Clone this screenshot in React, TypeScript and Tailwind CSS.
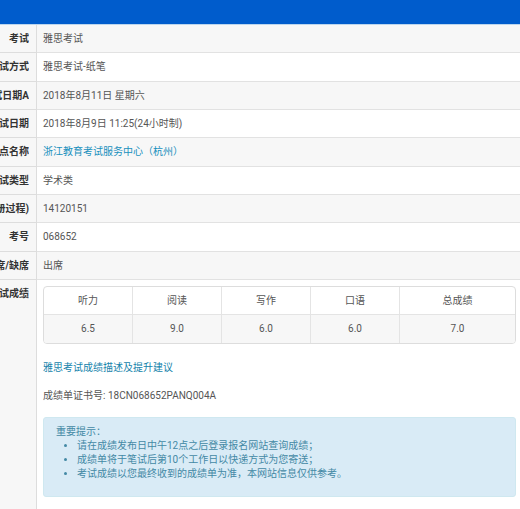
import React from 'react';

interface InfoRow {
    label: string;
    value: string;
    href?: string;
}

const infoRows: InfoRow[] = [
    { label: '考试', value: '雅思考试' },
    { label: '试方式', value: '雅思考试-纸笔' },
    { label: '试日期A', value: '2018年8月11日 星期六' },
    { label: '试日期', value: '2018年8月9日 11:25(24小时制)' },
    { label: '点名称', value: '浙江教育考试服务中心（杭州）', href: '#center' },
    { label: '试类型', value: '学术类' },
    { label: '册过程)', value: '14120151' },
    { label: '考号', value: '068652' },
    { label: '席/缺席', value: '出席' },
];

const scores = [
    { name: '听力', score: '6.5' },
    { name: '阅读', score: '9.0' },
    { name: '写作', score: '6.0' },
    { name: '口语', score: '6.0' },
    { name: '总成绩', score: '7.0' },
];

const notices = [
    '请在成绩发布日中午12点之后登录报名网站查询成绩；',
    '成绩单将于笔试后第10个工作日以快递方式为您寄送；',
    '考试成绩以您最终收到的成绩单为准，本网站信息仅供参考。',
];

function RowLabel({ children }: { children: React.ReactNode }) {
    return (
        <th
            scope="row"
            className="w-[37px] border-r border-b border-[#dddddd] bg-[#f7f7f7] p-0 pr-[7px] align-top font-bold text-[#333333]"
        >
            {/* Long labels run off to the left */}
            <div className="flex justify-end overflow-hidden pt-[7px] whitespace-nowrap">
                <span className="shrink-0">{children}</span>
            </div>
        </th>
    );
}

function ScoreTable() {
    return (
        <table className="w-full table-fixed border-separate border-spacing-0 overflow-hidden rounded border border-[#dddddd] text-center">
            <thead>
                <tr className="h-7">
                    {scores.map((s) => (
                        <th
                            key={s.name}
                            scope="col"
                            className="w-[89px] border-r border-b border-[#e4e4e4] p-0 font-normal last:w-auto last:border-r-0"
                        >
                            {s.name}
                        </th>
                    ))}
                </tr>
            </thead>
            <tbody>
                <tr className="h-7 bg-[#f7f7f7]">
                    {scores.map((s) => (
                        <td key={s.name} className="border-r border-[#e4e4e4] p-0 last:border-r-0">
                            {s.score}
                        </td>
                    ))}
                </tr>
            </tbody>
        </table>
    );
}

function Notice() {
    return (
        <div className="mt-[14px] rounded-[3px] border border-[#cfe8f0] bg-[#d9ebf6] px-3 pt-[7px] pb-[15px] text-[#4489a5]">
            <p>重要提示：</p>
            <ul className="list-disc pl-[21px]">
                {notices.map((text) => (
                    <li key={text}>{text}</li>
                ))}
            </ul>
        </div>
    );
}

export default function App() {
    return (
        <div className="flex min-h-screen flex-col bg-white font-[Roboto,'Noto_Sans_CJK_SC',sans-serif] text-[10px] leading-[14px] text-[#555555]">
            <header className="h-[25px] shrink-0 border-b border-[#bcd6ee] bg-[#005ccc]" />
            <table className="w-full table-fixed border-separate border-spacing-0 text-left">
                <tbody>
                    {infoRows.map((row) => (
                        <tr key={row.label} className="h-7 odd:bg-[#f7f7f7] nth-[3n+2]:h-[29px]">
                            <RowLabel>{row.label}</RowLabel>
                            <td className="border-b border-[#e2e2e2] p-0 pt-[7px] pl-[6px] align-top">
                                {row.href ? (
                                    <a href={row.href} className="text-[#1990bd]">
                                        {row.value}
                                    </a>
                                ) : (
                                    row.value
                                )}
                            </td>
                        </tr>
                    ))}
                    <tr>
                        <RowLabel>试成绩</RowLabel>
                        <td className="p-0 pt-[6px] pr-1 pb-4 pl-[6px] align-top">
                            <ScoreTable />
                            <p className="mt-[17px]">
                                <a href="#advice" className="text-[#1583ab]">
                                    雅思考试成绩描述及提升建议
                                </a>
                            </p>
                            <p className="mt-[14px]">成绩单证书号: 18CN068652PANQ004A</p>
                            <Notice />
                        </td>
                    </tr>
                </tbody>
            </table>
        </div>
    );
}
